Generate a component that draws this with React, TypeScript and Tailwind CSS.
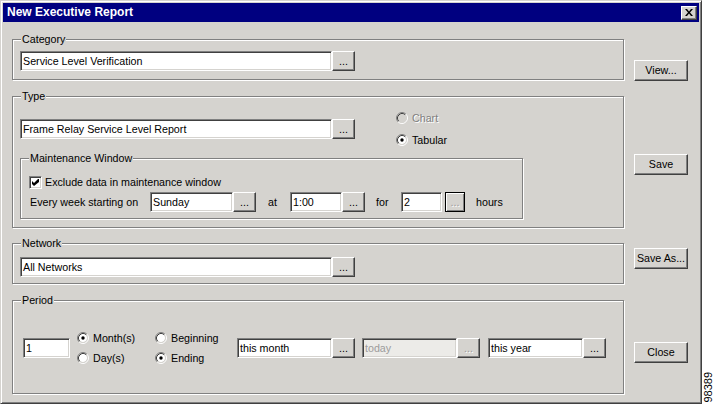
import React from "react";

const sunken =
  "border border-t-[#808080] border-l-[#808080] border-b-white border-r-white shadow-[inset_1px_1px_0_#404040,inset_-1px_-1px_0_#d5d3cf]";
const raised =
  "border border-t-white border-l-white border-b-[#404040] border-r-[#404040] shadow-[inset_-1px_-1px_0_#808080]";

function Field({
  value,
  w,
  disabled,
  className = "",
}: {
  value: string;
  w: string;
  disabled?: boolean;
  className?: string;
}) {
  return (
    <div
      className={`${w} ${className} h-[20px] shrink-0 flex items-center pl-[2px] whitespace-nowrap overflow-hidden ${sunken} ${
        disabled ? "bg-[#ecebe8] text-[#9c9c9c]" : "bg-white"
      }`}
    >
      {value}
    </div>
  );
}

function Dots({
  disabled,
  framed,
  className = "w-[23px]",
}: {
  disabled?: boolean;
  framed?: boolean;
  className?: string;
}) {
  const frame = framed
    ? "border border-black shadow-[inset_1px_1px_0_#fff,inset_-1px_-1px_0_#808080]"
    : raised;
  return (
    <div
      className={`${className} h-[20px] shrink-0 flex justify-center leading-[18px] ${frame} ${
        disabled ? "text-[#9c9c9c] [text-shadow:1px_1px_0_#fff]" : ""
      }`}
    >
      ...
    </div>
  );
}

function Radio({ checked, disabled }: { checked?: boolean; disabled?: boolean }) {
  return (
    <svg width="12" height="12" viewBox="0 0 12 12" className="shrink-0">
      <circle cx="6" cy="6" r="4" fill={disabled ? "#d5d3cf" : "#fff"} />
      <path d="M2.11 9.89 A5.5 5.5 0 0 1 9.89 2.11" stroke="#808080" fill="none" />
      <path d="M9.89 2.11 A5.5 5.5 0 0 1 2.11 9.89" stroke="#fff" fill="none" />
      <path d="M2.82 9.18 A4.5 4.5 0 0 1 9.18 2.82" stroke="#404040" fill="none" />
      <path d="M9.18 2.82 A4.5 4.5 0 0 1 2.82 9.18" stroke="#d5d3cf" fill="none" />
      {checked && <circle cx="6" cy="6" r="1.7" fill="#000" />}
    </svg>
  );
}

function RadioRow({
  label,
  checked,
  disabled,
  h,
}: {
  label: string;
  checked?: boolean;
  disabled?: boolean;
  h: string;
}) {
  return (
    <div className={`${h} flex items-center gap-[4px]`}>
      <Radio checked={checked} disabled={disabled} />
      <span className={disabled ? "text-[#808080] [text-shadow:1px_1px_0_#fff]" : ""}>
        {label}
      </span>
    </div>
  );
}

function Checkbox() {
  return (
    <div className={`w-[13px] h-[13px] shrink-0 bg-white flex items-center justify-center ${sunken}`}>
      <svg width="7" height="7" viewBox="0 0 7 7">
        <path d="M0 2 L2 4 L6 0 L7 0 L7 3 L2 7 L0 5 Z" fill="#000" />
      </svg>
    </div>
  );
}

function Group({
  label,
  className,
  children,
}: {
  label: string;
  className: string;
  children: React.ReactNode;
}) {
  return (
    <div
      className={`relative shrink-0 border border-[#808080] shadow-[inset_1px_1px_0_#fff,1px_1px_0_#fff] ${className}`}
    >
      <span className="absolute left-[8px] -top-[7px] px-[1px] bg-[#d5d3cf] leading-[13px]">
        {label}
      </span>
      {children}
    </div>
  );
}

function Btn({ label }: { label: string }) {
  return (
    <div className={`w-[54px] h-[21px] flex items-center justify-center ${raised}`}>
      {label}
    </div>
  );
}

export default function App() {
  return (
    <div className="w-[715px] h-[406px] bg-white flex items-start font-['Liberation_Sans',Arial,sans-serif] text-[10.7px] leading-[13px] text-black">
      <div className="w-[702px] h-[404px] shrink-0 bg-[#d5d3cf] border border-t-[#d5d3cf] border-l-[#d5d3cf] border-r-[#404040] border-b-[#404040] shadow-[inset_1px_1px_0_#fff,inset_-1px_-1px_0_#808080] p-[2px] flex flex-col">
        {/* title bar */}
        <div className="h-[19px] shrink-0 bg-[#000080] flex items-center justify-between pl-[4px] pr-[2px]">
          <span className="text-white font-bold text-[12px]">New Executive Report</span>
          <div className={`w-[16px] h-[14px] bg-[#d5d3cf] flex items-center justify-center ${raised}`}>
            <svg width="8" height="7" viewBox="0 0 8 7">
              <path
                d="M0 0 L2 0 L4 2.5 L6 0 L8 0 L5 3.5 L8 7 L6 7 L4 4.5 L2 7 L0 7 L3 3.5 Z"
                fill="#000"
              />
            </svg>
          </div>
        </div>

        <div className="flex flex-1 pl-[9px]">
          <div className="w-[612px] flex flex-col">
            <Group label="Category" className="mt-[17px] h-[41px] pt-[11px] pl-[7px]">
              <div className="flex">
                <Field w="w-[312px]" value="Service Level Verification" />
                <Dots />
              </div>
            </Group>

            <Group label="Type" className="mt-[16px] h-[132px] pt-[10px] pl-[7px]">
              <div className="flex items-center h-[44px]">
                <Field w="w-[312px]" value="Frame Relay Service Level Report" />
                <Dots />
                <div className="ml-[41px] flex flex-col">
                  <RadioRow h="h-[22px]" label="Chart" disabled />
                  <RadioRow h="h-[22px]" label="Tabular" checked />
                </div>
              </div>
              <Group
                label="Maintenance Window"
                className="mt-[7px] w-[503px] h-[61px] pt-[17px] pl-[8px]"
              >
                <div className="flex items-center h-[13px] gap-[3px]">
                  <Checkbox />
                  <span>Exclude data in maintenance window</span>
                </div>
                <div className="flex items-center mt-[3px] h-[20px]">
                  <span className="w-[121px] pl-[1px] shrink-0">Every week starting on</span>
                  <Field w="w-[83px]" value="Sunday" />
                  <Dots />
                  <span className="w-[34px] pl-[12px] shrink-0">at</span>
                  <Field w="w-[52px]" value="1:00" />
                  <Dots />
                  <span className="w-[36px] pl-[11px] shrink-0">for</span>
                  <Field w="w-[41px]" value="2" />
                  <Dots framed disabled className="ml-[3px] w-[20px]" />
                  <span className="pl-[11px]">hours</span>
                </div>
              </Group>
            </Group>

            <Group label="Network" className="mt-[15px] h-[41px] pt-[13px] pl-[7px]">
              <div className="flex">
                <Field w="w-[312px]" value="All Networks" />
                <Dots />
              </div>
            </Group>

            <Group label="Period" className="mt-[16px] h-[94px] pt-[27px] pl-[10px]">
              <div className="flex items-center h-[40px]">
                <Field w="w-[47px]" value="1" />
                <div className="ml-[7px] w-[78px] flex flex-col">
                  <RadioRow h="h-[20px]" label="Month(s)" checked />
                  <RadioRow h="h-[20px]" label="Day(s)" />
                </div>
                <div className="w-[82px] flex flex-col">
                  <RadioRow h="h-[20px]" label="Beginning" />
                  <RadioRow h="h-[20px]" label="Ending" checked />
                </div>
                <Field w="w-[95px]" value="this month" />
                <Dots />
                <Field w="w-[95px]" className="ml-[7px]" value="today" disabled />
                <Dots disabled />
                <Field w="w-[95px]" className="ml-[8px]" value="this year" />
                <Dots />
              </div>
            </Group>
          </div>

          <div className="ml-[10px] pt-[38px] flex flex-col gap-[73px]">
            <Btn label="View..." />
            <Btn label="Save" />
            <Btn label="Save As..." />
            <Btn label="Close" />
          </div>
        </div>
      </div>

      <div className="flex-1 h-full flex items-end justify-center pb-[3px]">
        <span className="[writing-mode:vertical-rl] rotate-180 text-[11px] leading-none">
          98389
        </span>
      </div>
    </div>
  );
}
